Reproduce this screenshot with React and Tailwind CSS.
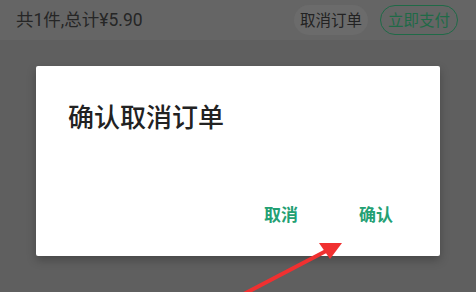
export default function App() {
    return (
        <div
            className="relative h-[292px] w-[476px] overflow-hidden bg-[#5f5f5f]"
            style={{ fontFamily: '"Noto Sans CJK SC", "Noto Sans", sans-serif' }}
        >
            {/* order footer bar (dimmed) */}
            <div className="flex h-10 items-center justify-between bg-[#656565] pl-4 pr-[18px]">
                <span
                    className="text-[17.5px] text-[#262626]"
                    style={{ fontFamily: 'Roboto, "Noto Sans CJK SC", sans-serif' }}
                >
                    共1件,总计¥5.90
                </span>
                <div className="flex items-center gap-3">
                    <span className="flex h-[30px] items-center rounded-full bg-[#6b6b6b] px-[6px] text-[15.5px] text-[#222]">
                        取消订单
                    </span>
                    <span className="flex h-[30px] items-center rounded-full border-[1.5px] border-[#1f6a47] px-[7px] text-[15.5px] text-[#1f6a47]">
                        立即支付
                    </span>
                </div>
            </div>

            {/* confirm dialog */}
            <div className="mx-[36px] mt-[26px] flex h-[190px] flex-col rounded-[2px] bg-white shadow-[0_4px_10px_rgba(0,0,0,0.25)]">
                <h3 className="pl-8 pt-[32px] text-[26px] font-medium leading-[36px] text-[#222]">确认取消订单</h3>
                <div className="mt-auto flex justify-end gap-[61px] pb-[30px] pr-[47px]">
                    <button className="text-[17px] font-semibold leading-6 text-[#23a073]">取消</button>
                    <button className="text-[17px] font-semibold leading-6 text-[#23a073]">确认</button>
                </div>
            </div>

            {/* red annotation arrow */}
            <svg className="absolute left-0 top-0" width="476" height="292" viewBox="0 0 476 292">
                <line x1="240" y1="296" x2="328" y2="250" stroke="#f03030" strokeWidth="4" strokeLinecap="round" />
                <polygon points="342,243 319,243 330,259" fill="#f03030" />
            </svg>
        </div>
    );
}
